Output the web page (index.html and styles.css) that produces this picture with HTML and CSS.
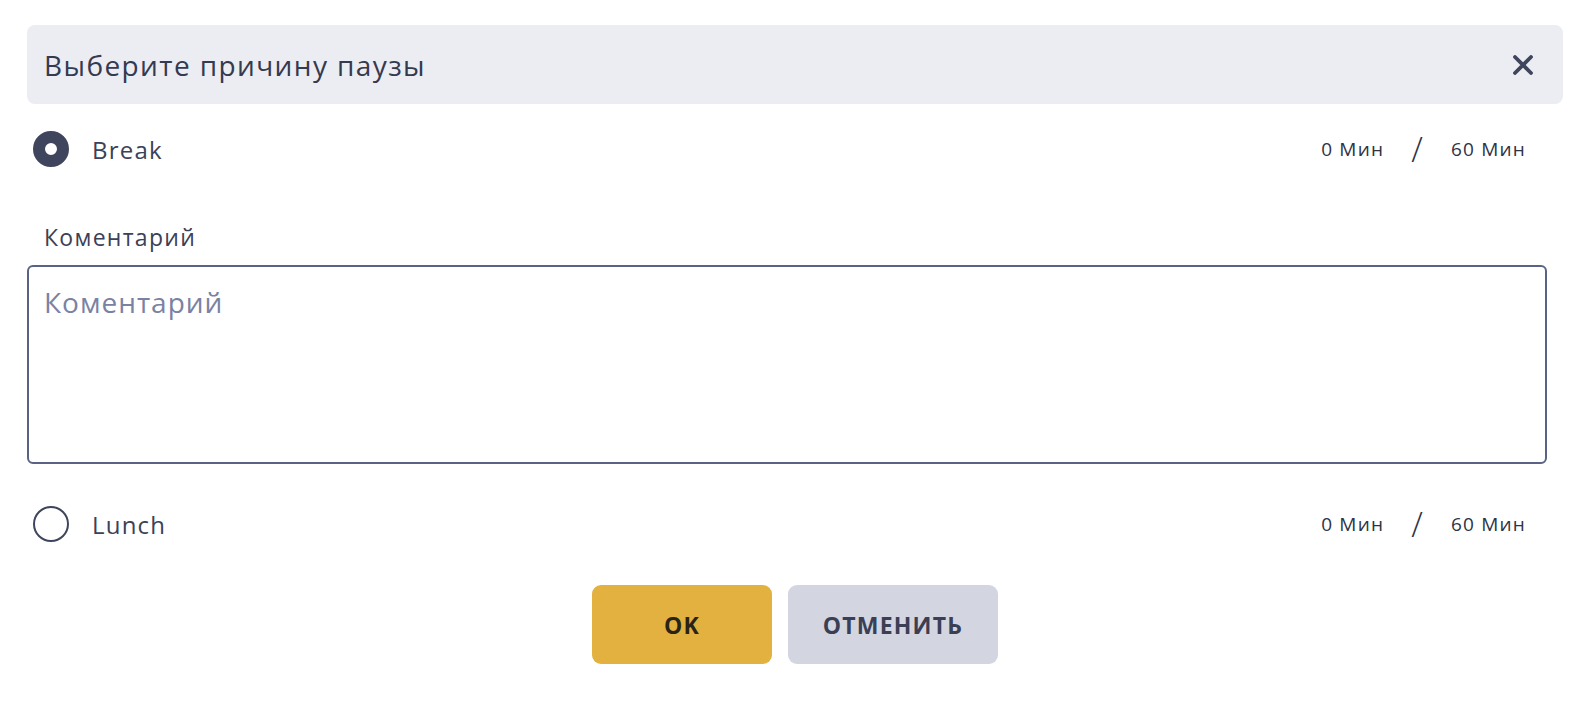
FILE: index.html
```html
<!DOCTYPE html>
<html lang="ru">
<head>
    <meta charset="UTF-8">
    <meta name="viewport" content="width=device-width, initial-scale=1.0">
    <title>Пауза</title>
    <link rel="stylesheet" href="styles.css">
</head>
<body>
    <div class="dialog">
        <div class="dialog-header">
            <h2 class="dialog-title">Выберите причину паузы</h2>
            <button class="close-btn" type="button" aria-label="Закрыть">
                <svg width="20" height="20" viewBox="0 0 20 20">
                    <path d="M2 2 L18 18 M18 2 L2 18" stroke="#3f455c" stroke-width="3.8" stroke-linecap="round"/>
                </svg>
            </button>
        </div>

        <label class="reason">
            <input type="radio" name="reason" value="break" checked>
            <span class="radio-mark"></span>
            <span class="reason-name">Break</span>
            <span class="reason-time">
                <span>0 Мин</span>
                <span class="time-sep">/</span>
                <span>60 Мин</span>
            </span>
        </label>

        <div class="comment">
            <div class="comment-label">Коментарий</div>
            <textarea class="comment-input" placeholder="Коментарий"></textarea>
        </div>

        <label class="reason">
            <input type="radio" name="reason" value="lunch">
            <span class="radio-mark"></span>
            <span class="reason-name">Lunch</span>
            <span class="reason-time">
                <span>0 Мин</span>
                <span class="time-sep">/</span>
                <span>60 Мин</span>
            </span>
        </label>

        <div class="actions">
            <button class="btn btn-ok" type="button">OK</button>
            <button class="btn btn-cancel" type="button">Отменить</button>
        </div>
    </div>
</body>
</html>
```

FILE: styles.css
```css
body {
    margin: 0;
    background: #fff;
    color: #3b4158;
    font-family: "Open Sans", "Noto Sans", sans-serif;
}

.dialog {
    padding: 25px 13px 0 27px;
}

/* Header */
.dialog-header {
    height: 79px;
    display: flex;
    align-items: center;
    justify-content: space-between;
    padding: 0 26px 0 17px;
    background-color: #ecedf2;
    border-radius: 8px;
}

.dialog-title {
    margin: 0;
    font-size: 28px;
    font-weight: 500;
    letter-spacing: 1.4px;
    color: #343a50;
}

.close-btn {
    width: 28px;
    height: 28px;
    padding: 0;
    border: none;
    background: none;
    display: flex;
    align-items: center;
    justify-content: center;
    cursor: pointer;
}

/* Reason rows */
.reason {
    display: flex;
    align-items: center;
    height: 36px;
    margin-top: 27px;
    padding-right: 37px;
    cursor: pointer;
}

.reason input {
    display: none;
}

.radio-mark {
    width: 36px;
    height: 36px;
    margin-left: 6px;
    box-sizing: border-box;
    border: 2px solid #3f455c;
    border-radius: 50%;
    background: #fff;
}

.reason input:checked + .radio-mark {
    border-width: 12px;
}

.reason-name {
    margin-left: 23px;
    font-size: 24px;
    font-weight: 500;
    letter-spacing: 1.2px;
}

.reason-time {
    margin-left: auto;
    display: flex;
    align-items: center;
    gap: 27px;
    font-size: 19px;
    letter-spacing: 1.2px;
    color: #2e3346;
}

.time-sep {
    font-size: 34px;
    font-weight: 300;
    line-height: 1;
}

/* Comment */
.comment {
    margin-top: 56px;
    padding-left: 17px;
}

.comment-label {
    font-size: 23px;
    font-weight: 500;
    line-height: 28px;
    letter-spacing: 1.3px;
}

.comment-input {
    display: block;
    width: 1520px;
    height: 199px;
    margin: 14px 0 0 -17px;
    box-sizing: border-box;
    padding: 16px 15px;
    border: 2px solid #5a6385;
    border-radius: 6px;
    font-family: inherit;
    font-size: 28px;
    letter-spacing: 1px;
    color: #343a50;
    resize: none;
    outline: none;
}

.comment-input::placeholder {
    color: #7a82a3;
}

.comment + .reason {
    margin-top: 42px;
}

/* Buttons */
.actions {
    display: flex;
    justify-content: center;
    gap: 16px;
    margin-top: 43px;
}

.btn {
    height: 79px;
    border: none;
    border-radius: 9px;
    font-family: inherit;
    font-size: 23px;
    font-weight: 700;
    letter-spacing: 1.2px;
    text-transform: uppercase;
    cursor: pointer;
}

.btn-ok {
    width: 180px;
    background-color: #e2b13f;
    color: #2a2416;
}

.btn-cancel {
    width: 210px;
    background-color: #d3d6e1;
    color: #3a3f55;
}
```
